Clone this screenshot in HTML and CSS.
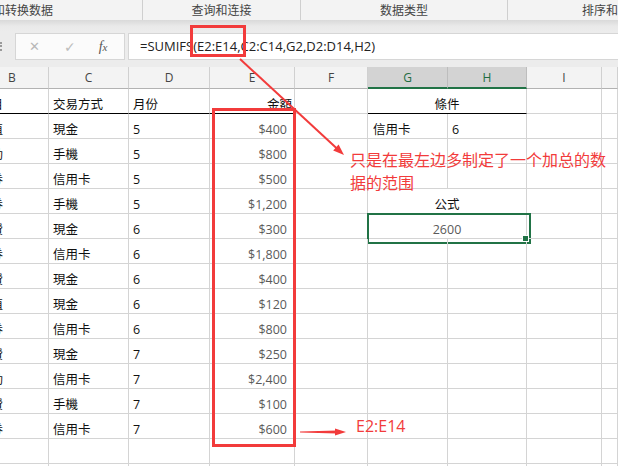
FILE: index.html
```html
<!DOCTYPE html>
<html lang="zh">
<head>
<meta charset="utf-8">
<title>SUMIFS</title>
<link rel="stylesheet" href="styles.css">
</head>
<body>
<div class="app">
  <div class="ribbon">
    <div class="grp grp1"><span>和转换数据</span></div>
    <div class="grp grp2"><span>查询和连接</span></div>
    <div class="grp grp3"><span>数据类型</span></div>
    <div class="grp grp4"><span>排序和筛选</span></div>
  </div>
  <div class="formula-area">
    <div class="grip"></div>
    <div class="fx-buttons">
      <span class="btn-x">✕</span>
      <span class="btn-ok">✓</span>
      <span class="btn-fx">f<i>x</i></span>
    </div>
    <div class="formula">=SUMIFS(E2:E14,C2:C14,G2,D2:D14,H2)</div>
  </div>
  <div class="sheet">
    <div class="hd hd-b">B</div><div class="hd">C</div><div class="hd">D</div><div class="hd">E</div><div class="hd">F</div><div class="hd sel">G</div><div class="hd sel">H</div><div class="hd">I</div><div class="hd"></div>

    <div class="c b top"><span>項目</span></div><div class="c top">交易方式</div><div class="c top">月份</div><div class="c top r head-r">金額</div><div class="c"></div><div class="c top span2 ctr">條件</div><div class="c"></div><div class="c"></div>

    <div class="c b"><span>加值</span></div><div class="c">現金</div><div class="c">5</div><div class="c r">$400</div><div class="c"></div><div class="c g">信用卡</div><div class="c">6</div><div class="c"></div><div class="c"></div>
    <div class="c b"><span>運動</span></div><div class="c">手機</div><div class="c">5</div><div class="c r">$800</div><div class="c"></div><div class="c"></div><div class="c"></div><div class="c"></div><div class="c"></div>
    <div class="c b"><span>禮券</span></div><div class="c">信用卡</div><div class="c">5</div><div class="c r">$500</div><div class="c"></div><div class="c"></div><div class="c"></div><div class="c"></div><div class="c"></div>
    <div class="c b"><span>禮券</span></div><div class="c">手機</div><div class="c">5</div><div class="c r">$1,200</div><div class="c"></div><div class="c span2 ctr">公式</div><div class="c"></div><div class="c"></div>
    <div class="c b"><span>餐費</span></div><div class="c">現金</div><div class="c">6</div><div class="c r">$300</div><div class="c"></div><div class="c span2 ctr val selected">2600<span class="handle"></span></div><div class="c"></div><div class="c"></div>
    <div class="c b"><span>禮券</span></div><div class="c">信用卡</div><div class="c">6</div><div class="c r">$1,800</div><div class="c"></div><div class="c"></div><div class="c"></div><div class="c"></div><div class="c"></div>
    <div class="c b"><span>餐費</span></div><div class="c">現金</div><div class="c">6</div><div class="c r">$400</div><div class="c"></div><div class="c"></div><div class="c"></div><div class="c"></div><div class="c"></div>
    <div class="c b"><span>加值</span></div><div class="c">現金</div><div class="c">6</div><div class="c r">$120</div><div class="c"></div><div class="c"></div><div class="c"></div><div class="c"></div><div class="c"></div>
    <div class="c b"><span>禮券</span></div><div class="c">信用卡</div><div class="c">6</div><div class="c r">$800</div><div class="c"></div><div class="c"></div><div class="c"></div><div class="c"></div><div class="c"></div>
    <div class="c b"><span>餐費</span></div><div class="c">現金</div><div class="c">7</div><div class="c r">$250</div><div class="c"></div><div class="c"></div><div class="c"></div><div class="c"></div><div class="c"></div>
    <div class="c b"><span>運動</span></div><div class="c">信用卡</div><div class="c">7</div><div class="c r">$2,400</div><div class="c"></div><div class="c"></div><div class="c"></div><div class="c"></div><div class="c"></div>
    <div class="c b"><span>餐費</span></div><div class="c">手機</div><div class="c">7</div><div class="c r">$100</div><div class="c"></div><div class="c"></div><div class="c"></div><div class="c"></div><div class="c"></div>
    <div class="c b"><span>禮券</span></div><div class="c">信用卡</div><div class="c">7</div><div class="c r">$600</div><div class="c"></div><div class="c"></div><div class="c"></div><div class="c"></div><div class="c"></div>
    <div class="c b"></div><div class="c"></div><div class="c"></div><div class="c"></div><div class="c"></div><div class="c"></div><div class="c"></div><div class="c"></div><div class="c"></div>
    <div class="c b"></div><div class="c"></div><div class="c"></div><div class="c"></div><div class="c"></div><div class="c"></div><div class="c"></div><div class="c"></div><div class="c"></div>
  </div>

  <svg class="marks" width="618" height="466" viewBox="0 0 618 466">
    <rect x="191.5" y="26.5" width="53" height="29" fill="none" stroke="#f23b3b" stroke-width="3"/>
    <rect x="213.5" y="109.5" width="81" height="336" fill="none" stroke="#f23b3b" stroke-width="3"/>
    <line x1="240" y1="59" x2="338" y2="149.5" stroke="#f23b3b" stroke-width="2"/>
    <polygon points="344,155 333.2,150.4 338.6,144.6" fill="#f23b3b"/>
    <polygon points="300,431.6 337,430.6 337,433.4 300,432.4" fill="#f23b3b"/>
    <polygon points="335,428.5 346,432 335,435.5" fill="#f23b3b"/>
  </svg>
  <div class="note">只是在最左边多制定了一个加总的数据的范围</div>
  <div class="note2">E2:E14</div>
</div>
</body>
</html>
```
FILE: styles.css
```css
* { box-sizing: border-box; }
html, body { margin: 0; padding: 0; }
body { width: 618px; height: 466px; overflow: hidden; background: #fff; }
.app { position: relative; width: 618px; height: 466px; overflow: hidden; }

.ribbon {
  display: flex; height: 20px; background: #f3f3f3;
  font-family: "Noto Sans CJK SC", sans-serif; font-size: 12px; color: #444;
}
.grp { position: relative; height: 20px; line-height: 20px; white-space: nowrap; overflow: hidden; border-right: 1px solid #cfcfcf; }
.grp1 { width: 143px; }
.grp1 span { margin-left: -7px; }
.grp2 { width: 158px; text-align: center; }
.grp3 { width: 207px; text-align: center; }
.grp4 { flex: 1; border-right: 0; padding-left: 74px; }

.formula-area {
  height: 47px; display: flex; align-items: flex-start; padding-top: 13px;
  background: linear-gradient(#d9d9d9, #e9e9e9 6px, #ececec 12px, #ececec);
}
.grip { width: 3px; height: 9px; margin-top: 9px; border-left: 2px dotted #9a9a9a; }
.fx-buttons {
  margin-left: 12px; width: 110px; height: 27px; background: #fbfbfb; border: 1px solid #d6d6d6;
  display: flex; align-items: center; font-family: "DejaVu Sans", sans-serif;
}
.btn-x { margin-left: 13px; font-size: 13px; color: #b8b8b8; }
.btn-ok { margin-left: 24px; font-size: 14px; color: #bdbdbd; }
.btn-fx { margin-left: 23px; font-family: "Liberation Serif", serif; font-style: italic; font-size: 14px; color: #555; }
.btn-fx i { font-size: 11px; }
.formula {
  margin-left: 3px; flex: 1; height: 27px; background: #fff; border: 1px solid #d6d6d6; border-right: 0;
  font-family: "Open Sans", sans-serif; font-size: 13px; color: #222; line-height: 24px; padding-left: 11px; white-space: nowrap;
}

.sheet {
  display: grid;
  grid-template-columns: 49px 80px 81px 85px 73px 80px 79px 75px 1fr;
  grid-template-rows: 22px repeat(16, 25px);
  font-family: "Open Sans", "Noto Sans CJK TC", sans-serif; font-size: 12.5px; color: #111;
}
.hd {
  background: #f3f3f3; border-right: 1px solid #d0d0d0; border-bottom: 1px solid #b2b2b2;
  font-family: "Open Sans", sans-serif; font-size: 12px; color: #444; text-align: center; line-height: 22px;
}
.hd-b { text-align: left; padding-left: 8px; }
.hd.sel { background: #d3d3d3; color: #1f6d42; border-bottom: 2px solid #217346; border-right-color: #bdbdbd; }

.c {
  position: relative; border-right: 1px solid #d4d4d4; border-bottom: 1px solid #d4d4d4;
  display: flex; align-items: flex-end; padding: 0 4px 0; white-space: nowrap;
}
.c.b { padding: 0; overflow: hidden; }
.c.b span { margin-left: -22px; }
.c.top { border-bottom-color: #000; }
.c.r { justify-content: flex-end; padding-right: 7px; color: #5a5a5a; }
.c.head-r { padding-right: 2px; color: #111; }
.c.g { padding-left: 5px; }
.span2 { grid-column: span 2; }
.ctr { justify-content: center; }
.val { color: #5a5a5a; }
.selected::after {
  content: ""; position: absolute; left: -1px; top: -1px; width: 160px; height: 27px;
  border: 2px solid #217346;
}
.handle {
  position: absolute; left: 154px; top: 21px; width: 7px; height: 7px; background: #217346;
  border: 1px solid #fff; z-index: 2;
}

.marks { position: absolute; left: 0; top: 0; pointer-events: none; }
.note {
  position: absolute; left: 350px; top: 148px; width: 258px;
  font-family: "Noto Sans CJK SC", sans-serif; font-size: 16px; line-height: 23px; color: #f23b3b;
}
.note2 {
  position: absolute; left: 356px; top: 415px;
  font-family: "Open Sans", sans-serif; font-size: 16px; color: #f23b3b;
}
```
